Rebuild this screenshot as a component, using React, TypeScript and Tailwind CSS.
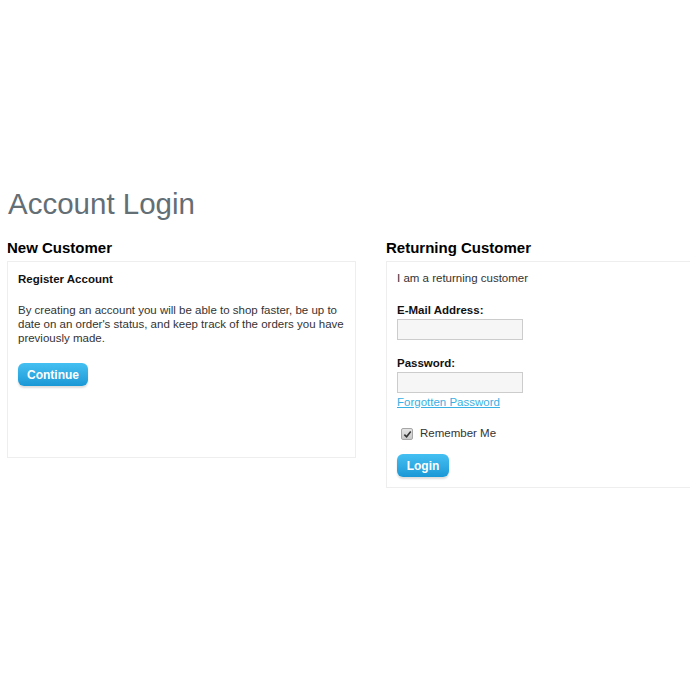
const font = { fontFamily: '"Liberation Sans", Arial, sans-serif' };

const buttonClass =
  "inline-flex h-[23px] items-center justify-center rounded-[6px] bg-gradient-to-b from-[#45c0f2] to-[#1998d6] px-[11px] text-[12px] font-bold text-white shadow-[0_2px_2px_#dddddd]";

const inputClass =
  "block h-[21px] w-[126px] border border-[#cccccc] bg-[#f6f6f6] px-[3px] text-[12px] outline-none";

function NewCustomer() {
  return (
    <div className="w-[349px] shrink-0">
      <h2 className="h-[22px] text-[15px] font-bold leading-[22px] text-black">New Customer</h2>
      <div className="mt-[2px] h-[197px] border border-[#eeeeee] px-[10px] pt-[10px]">
        <p className="text-[11.5px] font-bold leading-[14px] text-[#111]">Register Account</p>
        <p className="mt-[17px] text-[11.5px] leading-[14px] text-[#333]">
          By creating an account you will be able to shop faster, be up to date on an order's
          status, and keep track of the orders you have previously made.
        </p>
        <button type="button" className={`${buttonClass} mt-[18px] w-[70px]`}>
          Continue
        </button>
      </div>
    </div>
  );
}

function ReturningCustomer() {
  return (
    <div className="w-[349px] shrink-0">
      <h2 className="h-[22px] text-[15px] font-bold leading-[22px] text-black">
        Returning Customer
      </h2>
      <div className="mt-[2px] border border-[#eeeeee] px-[10px] pt-[9px] pb-[10px]">
        <p className="text-[11.5px] leading-[14px] text-[#333]">I am a returning customer</p>
        <p className="mt-[18px] text-[11.5px] font-bold leading-[14px] text-[#111]">
          E-Mail Address:
        </p>
        <input type="text" className={`${inputClass} mt-[2px]`} />
        <p className="mt-[16px] text-[11.5px] font-bold leading-[14px] text-[#111]">Password:</p>
        <input type="password" className={`${inputClass} mt-[2px]`} />
        <a href="#" className="mt-[2px] block text-[11.5px] leading-[14px] text-[#38b0e3] underline">
          Forgotten Password
        </a>
        <label className="mt-[18px] flex h-[14px] items-center text-[11.5px] text-[#333]">
          <span className="ml-[4px] mr-[7px] flex h-[12px] w-[12px] items-center justify-center rounded-[2px] border border-[#a6a6a6] bg-gradient-to-b from-[#e4e4e4] to-[#c9c9c9]">
            <svg width="9" height="9" viewBox="0 0 10 10" aria-hidden>
              <path d="M1.5 5.2 L4 7.6 L8.6 1.8" fill="none" stroke="#333" strokeWidth="1.8" />
            </svg>
          </span>
          Remember Me
        </label>
        <button type="button" className={`${buttonClass} mt-[13px] w-[52px]`}>
          Login
        </button>
      </div>
    </div>
  );
}

export default function App() {
  return (
    <div className="h-[690px] w-[690px] overflow-hidden bg-white" style={font}>
      <div className="pl-[7px] pt-[186px]">
        <h1 className="pl-[1px] text-[29.5px] font-normal leading-[35px] text-[#636e75]">
          Account Login
        </h1>
        <div className="mt-[16px] flex gap-[30px]">
          <NewCustomer />
          <ReturningCustomer />
        </div>
      </div>
    </div>
  );
}
